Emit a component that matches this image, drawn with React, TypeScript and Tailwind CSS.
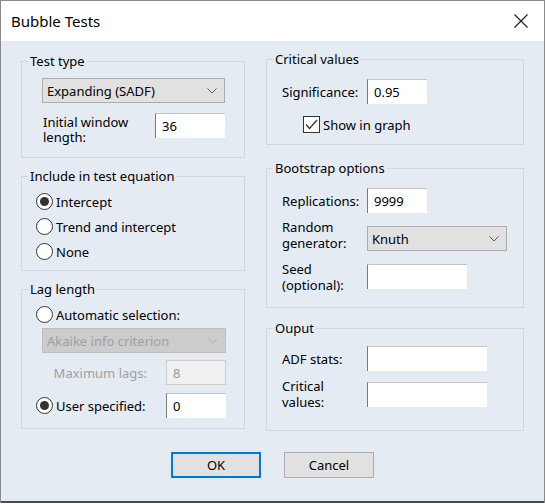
import React from 'react';

function Chevron({ disabled }: { disabled?: boolean }) {
    return (
        <svg width="10" height="6" viewBox="0 0 10 6" className="shrink-0">
            <polyline points="0.5,0.5 5,5 9.5,0.5" fill="none" stroke={disabled ? '#b4b4b4' : '#606060'} strokeWidth="1" />
        </svg>
    );
}

function Select({ value, className, disabled }: { value: string; className: string; disabled?: boolean }) {
    return (
        <div
            className={
                disabled
                    ? `flex items-center justify-between border border-[#bfbfbf] bg-[#cccccc] pl-[4px] pr-[7px] text-[#a0a0a0] ${className}`
                    : `flex items-center justify-between border border-[#adadad] bg-[#e1e1e1] pl-[4px] pr-[7px] ${className}`
            }
        >
            <span>{value}</span>
            <Chevron disabled={disabled} />
        </div>
    );
}

function Field({ value, className, disabled }: { value?: string; className: string; disabled?: boolean }) {
    return (
        <div
            className={
                disabled
                    ? `flex items-center border border-[#cccccc] bg-[#f0f0f0] pl-[6px] text-[#9a9a9a] ${className}`
                    : `flex items-center border-l border-t border-l-[#7a7a7a] border-t-[#c4c4c4] bg-white pl-[6px] ${className}`
            }
        >
            {value}
        </div>
    );
}

function Radio({ checked, label }: { checked?: boolean; label: string }) {
    return (
        <div className="flex h-[25px] items-center">
            <div className="flex h-[17px] w-[17px] items-center justify-center rounded-full border border-[#333333] bg-white">
                {checked && <div className="h-[9px] w-[9px] rounded-full bg-[#333333]" />}
            </div>
            <span className="ml-[3px]">{label}</span>
        </div>
    );
}

export default function App() {
    return (
        <div className="flex h-[503px] w-[545px] flex-col border-x border-t border-x-[#8a8a8a] border-t-[#8a8a8a] font-['Noto_Sans',sans-serif] text-[13px] leading-[16px] text-black">
            {/* Title bar */}
            <div className="flex h-[40px] shrink-0 items-center justify-between bg-white pl-[10px] pr-[16px]">
                <span className="text-[15px]">Bubble Tests</span>
                <svg width="14" height="14" viewBox="0 0 14 14">
                    <path d="M0.5 0.5 L13.5 13.5 M13.5 0.5 L0.5 13.5" stroke="#1a1a1a" strokeWidth="1.1" />
                </svg>
            </div>

            {/* Body */}
            <div className="flex flex-1 flex-col border-b-2 border-b-[#4a4a4a] bg-[#e5ebf3] px-[20px]">
                <div className="flex gap-[21px]">
                    {/* Left column */}
                    <div className="flex w-[224px] flex-col pt-[12px]">
                        <fieldset className="border border-[#cfd7e1]">
                            <legend className="ml-[6px] px-[2px]">Test type</legend>
                            <div className="flex flex-col pb-[12px] pl-[20px] pt-[9px]">
                                <Select value="Expanding (SADF)" className="h-[25px] w-[183px]" />
                                <div className="mt-[10px] flex items-start">
                                    <div className="ml-[1px] w-[112px] pt-[2px] leading-[15px]">
                                        Initial window
                                        <br />
                                        length:
                                    </div>
                                    <Field value="36" className="h-[25px] w-[70px]" />
                                </div>
                            </div>
                        </fieldset>

                        <fieldset className="mt-[10px] border border-[#cfd7e1]">
                            <legend className="ml-[6px] px-[2px]">Include in test equation</legend>
                            <div className="flex flex-col pb-[6px] pl-[14px] pt-[5px]">
                                <Radio checked label="Intercept" />
                                <Radio label="Trend and intercept" />
                                <Radio label="None" />
                            </div>
                        </fieldset>

                        <fieldset className="mt-[10px] border border-[#cfd7e1]">
                            <legend className="ml-[6px] px-[2px]">Lag length</legend>
                            <div className="flex flex-col pb-[10px] pl-[14px] pt-[5px]">
                                <Radio label="Automatic selection:" />
                                <Select value="Akaike info criterion" disabled className="ml-[6px] mt-[1px] h-[25px] w-[184px]" />
                                <div className="mt-[7px] flex items-center">
                                    <span className="w-[122px] pr-[11px] text-right text-[#a0a0a0]">Maximum lags:</span>
                                    <Field value="8" disabled className="ml-[8px] h-[25px] w-[60px]" />
                                </div>
                                <div className="mt-[8px] flex items-center">
                                    <div className="w-[130px]">
                                        <Radio checked label="User specified:" />
                                    </div>
                                    <Field value="0" className="h-[25px] w-[60px]" />
                                </div>
                            </div>
                        </fieldset>
                    </div>

                    {/* Right column */}
                    <div className="flex w-[258px] flex-col pt-[10px]">
                        <fieldset className="border border-[#cfd7e1]">
                            <legend className="ml-[6px] px-[2px]">Critical values</legend>
                            <div className="flex flex-col pb-[11px] pl-[15px] pt-[12px]">
                                <div className="flex items-center">
                                    <span className="w-[85px]">Significance:</span>
                                    <Field value="0.95" className="h-[25px] w-[60px]" />
                                </div>
                                <div className="ml-[21px] mt-[12px] flex items-center">
                                    <div className="flex h-[17px] w-[17px] items-center justify-center border border-[#333333] bg-white">
                                        <svg width="13" height="11" viewBox="0 0 13 11">
                                            <polyline points="1,5.5 4.5,9.5 12,1" fill="none" stroke="#333333" strokeWidth="1.3" />
                                        </svg>
                                    </div>
                                    <span className="ml-[3px]">Show in graph</span>
                                </div>
                            </div>
                        </fieldset>

                        <fieldset className="mt-[15px] border border-[#cfd7e1]">
                            <legend className="ml-[6px] px-[2px]">Bootstrap options</legend>
                            <div className="flex flex-col pb-[14px] pl-[15px] pt-[12px]">
                                <div className="flex items-center">
                                    <span className="w-[85px]">Replications:</span>
                                    <Field value="9999" className="h-[25px] w-[60px]" />
                                </div>
                                <div className="mt-[6px] flex items-start">
                                    <span className="w-[85px]">
                                        Random
                                        <br />
                                        generator:
                                    </span>
                                    <Select value="Knuth" className="mt-[7px] h-[25px] w-[140px]" />
                                </div>
                                <div className="mt-[10px] flex items-start">
                                    <span className="w-[85px]">
                                        Seed
                                        <br />
                                        (optional):
                                    </span>
                                    <Field className="mt-[3px] h-[25px] w-[100px]" />
                                </div>
                            </div>
                        </fieldset>

                        <fieldset className="mt-[12px] border border-[#cfd7e1]">
                            <legend className="ml-[6px] px-[2px]">Ouput</legend>
                            <div className="flex flex-col pb-[20px] pl-[15px] pt-[10px]">
                                <div className="flex items-center">
                                    <span className="w-[85px]">ADF stats:</span>
                                    <Field className="h-[25px] w-[120px]" />
                                </div>
                                <div className="mt-[7px] flex items-start">
                                    <span className="w-[85px]">
                                        Critical
                                        <br />
                                        values:
                                    </span>
                                    <Field className="mt-[4px] h-[25px] w-[120px]" />
                                </div>
                            </div>
                        </fieldset>
                    </div>
                </div>

                {/* Buttons */}
                <div className="mt-[21px] flex justify-center gap-[23px]">
                    <button className="h-[26px] w-[90px] border-2 border-[#0078d7] bg-[#e1e1e1]">OK</button>
                    <button className="h-[26px] w-[90px] border border-[#adadad] bg-[#e1e1e1]">Cancel</button>
                </div>
            </div>
        </div>
    );
}
